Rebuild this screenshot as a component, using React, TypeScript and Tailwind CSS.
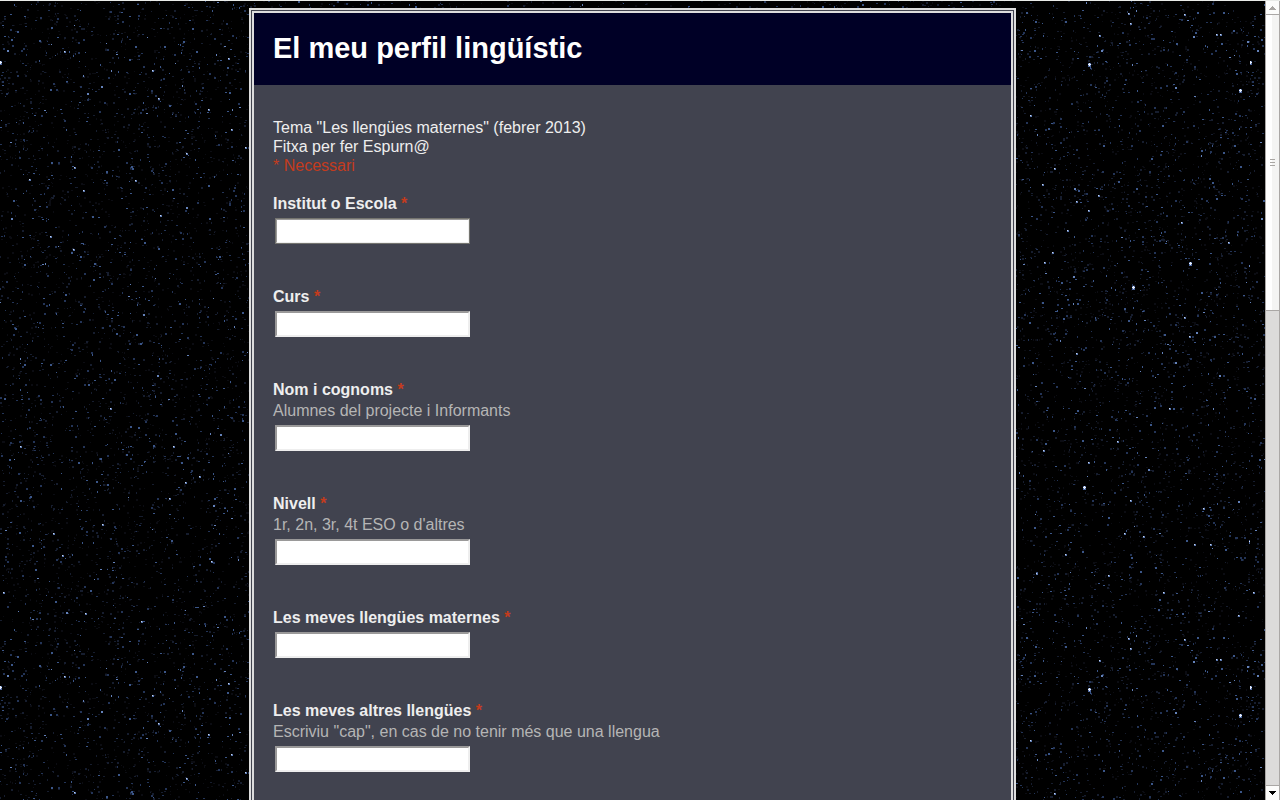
import { useId, useMemo } from "react";

interface Question {
  name: string;
  title: string;
  help?: string;
  focused?: boolean;
}

const QUESTIONS: Question[] = [
  { name: "institut", title: "Institut o Escola", focused: true },
  { name: "curs", title: "Curs" },
  { name: "nom", title: "Nom i cognoms", help: "Alumnes del projecte i Informants" },
  { name: "nivell", title: "Nivell", help: "1r, 2n, 3r, 4t ESO o d'altres" },
  { name: "maternes", title: "Les meves llengües maternes" },
  {
    name: "altres",
    title: "Les meves altres llengües",
    help: 'Escriviu "cap", en cas de no tenir més que una llengua',
  },
];

// The sky repeats, one tile is this large
const TILE_W = 1250;
const TILE_H = 625;

const TONES = [
  { color: "#0b0c12", count: 9000 },
  { color: "#161d2e", count: 7000 },
  { color: "#233457", count: 3600 },
  { color: "#3b5688", count: 1500 },
  { color: "#6482ba", count: 320 },
];

const BRIGHT: [number, number][] = [
  [158, 98], [228, 58], [208, 109], [231, 129], [152, 70], [64, 51], [245, 147],
  [186, 153], [135, 180], [83, 190], [50, 236], [160, 215], [74, 167], [29, 179],
  [110, 408], [20, 446], [173, 446], [199, 476], [185, 482], [169, 498], [102, 524],
  [62, 555], [53, 533], [211, 561], [141, 621], [3, 592], [85, 613], [73, 249],
  [1128, 13], [1130, 23], [1184, 14], [1216, 34], [1220, 34], [1088, 210], [1098, 195],
  [1042, 184], [1076, 201], [1067, 230], [1044, 262], [1181, 222], [1228, 242],
  [1184, 317], [1076, 353], [1189, 336], [1052, 252], [1054, 168], [1099, 35], [1030, 115],
  [1043, 450], [1117, 441], [1088, 462], [1169, 408], [1084, 487], [1036, 573],
  [1143, 536], [1203, 508], [1065, 554], [1108, 575], [1124, 533], [1194, 544],
  [1210, 544], [1238, 615], [1250, 461], [1253, 592], [1130, 500], [1163, 592],
];

const BIG: [number, number][] = [
  [0, 62], [1089, 64], [1240, 90], [1190, 263], [1133, 287], [1084, 487], [1250, 541],
];

function createRandom(seed: number) {
  let s = seed;
  return () => {
    s = (s * 1664525 + 1013904223) % 4294967296;
    return s / 4294967296;
  };
}

function buildSky() {
  const random = createRandom(2013);
  return TONES.map(({ color, count }) => {
    let d = "";
    for (let i = 0; i < count; i++) {
      const x = Math.floor(random() * TILE_W);
      const y = Math.floor(random() * TILE_H);
      const w = random() > 0.4 ? 2 : 1;
      const h = random() > 0.6 ? 2 : 1;
      d += `M${x} ${y}h${w}v${h}h-${w}z`;
    }
    return { color, d };
  });
}

function StarrySky() {
  const id = useId();
  const layers = useMemo(buildSky, []);

  return (
    <svg className="absolute inset-0 w-full h-full" shapeRendering="crispEdges" aria-hidden="true">
      <defs>
        <pattern id={id} y={-1} width={TILE_W} height={TILE_H} patternUnits="userSpaceOnUse">
          {layers.map((layer) => (
            <path key={layer.color} d={layer.d} fill={layer.color} />
          ))}
          {BRIGHT.map(([x, y]) => (
            <g key={`${x}-${y}`}>
              <path d={`M${x} ${y}h2v2h-2z`} fill="#5c79b0" />
              <path d={`M${x} ${y}h1v1h-1z`} fill="#c9d6ee" />
            </g>
          ))}
          {BIG.map(([x, y]) => (
            <g key={`${x}-${y}`}>
              <path d={`M${x - 1} ${y - 1}h3v4h-3z`} fill="#4d68a0" />
              <path d={`M${x - 1} ${y}h3v1h-3zM${x} ${y - 1}h1v3h-1z`} fill="#e6eefc" />
            </g>
          ))}
        </pattern>
      </defs>
      <rect width="100%" height="100%" fill={`url(#${id})`} />
    </svg>
  );
}

function Required() {
  return <span className="text-[#c43b1d]">*</span>;
}

function Field({ name, title, help, focused }: Question) {
  return (
    <div className="mb-[43px]">
      <label htmlFor={name} className="block">
        <span className="block font-bold">
          {title} <Required />
        </span>
        {help && <span className="block mt-0.5 text-[#b5b5b5]">{help}</span>}
      </label>
      <input
        id={name}
        name={name}
        type="text"
        required
        className={`block w-[195px] h-[26px] mt-[5px] ml-0.5 px-1 bg-white text-black border-2 border-t-[#9a9999] border-l-[#9a9999] border-b-[#eeeeee] border-r-[#eeeeee] ${
          focused ? "outline-1 -outline-offset-1 outline-[#74746f]" : "outline-none"
        }`}
      />
    </div>
  );
}

function ScrollBar() {
  return (
    <div className="flex flex-col w-[15px] shrink-0 border-x border-[#aaa7a5] bg-[#dcdbda]">
      <button aria-label="Amunt" className="flex items-center justify-center h-[13px] shrink-0 bg-[#fcfcfb]">
        <svg width="7" height="4" shapeRendering="crispEdges">
          <path d="M3 0h1v1h1v1h1v1h1v1h-7v-1h1v-1h1v-1h1z" fill="#a9a6a3" />
        </svg>
      </button>
      <div className="flex flex-col items-center justify-center gap-0.5 h-[297px] border-y border-[#aaa7a5] bg-linear-to-r from-white from-50% to-[#f4f4f3] to-50%">
        <span className="w-[5px] h-px bg-[#a9a6a3]" />
        <span className="w-[5px] h-px bg-[#a9a6a3]" />
        <span className="w-[5px] h-px bg-[#a9a6a3]" />
      </div>
      <button
        aria-label="Avall"
        className="flex items-center justify-center h-[15px] mt-auto shrink-0 border-t border-[#aaa7a5] bg-[#fcfcfb]"
      >
        <svg width="7" height="4" shapeRendering="crispEdges">
          <path d="M0 0h7v1h-1v1h-1v1h-1v1h-1v-1h-1v-1h-1v-1h-1z" fill="#000000" />
        </svg>
      </button>
    </div>
  );
}

export default function App() {
  return (
    <div className="flex h-screen overflow-hidden border-t border-[#e9ebe8] bg-black font-['Liberation_Sans',Arial,sans-serif] text-base leading-[19px] text-[#eeeeee]">
      <main className="relative flex-1 min-w-0 overflow-hidden">
        <StarrySky />
        <form className="relative w-full max-w-[767px] min-h-full mx-auto mt-[7px] border-[5px] border-double border-[#dddddd] bg-[#41434f]">
          <header className="px-[19px] pt-[17px] pb-[19px] bg-[#000026]">
            <h1 className="text-[29px] leading-9 font-bold text-white">El meu perfil lingüístic</h1>
          </header>

          <div className="px-[19px] pt-[33px]">
            <p>
              Tema "Les llengües maternes" (febrer 2013)
              <br />
              Fitxa per fer Espurn@
            </p>
            <p className="mb-[19px] text-[#c43b1d]">* Necessari</p>

            {QUESTIONS.map((question) => (
              <Field key={question.name} {...question} />
            ))}
          </div>
        </form>
      </main>
      <ScrollBar />
    </div>
  );
}
